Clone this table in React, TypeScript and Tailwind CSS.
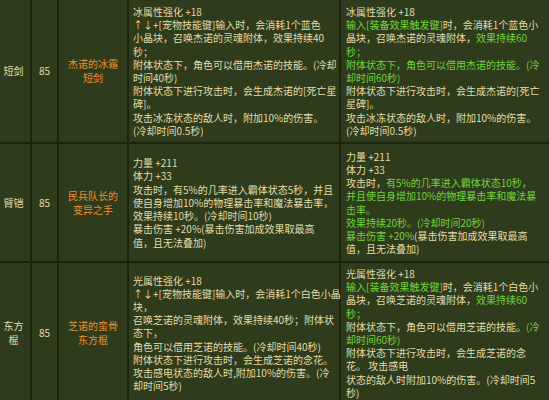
import React from "react";

// "~" toggles the green highlight inside a line
type Cell = string[];

const rows: {
  slot: string[];
  level: string;
  name: string[];
  before: Cell;
  after: Cell;
  h: string;
}[] = [
  {
    slot: ["短剑"],
    level: "85",
    name: ["杰诺的冰霜", "短剑"],
    before: [
      "冰属性强化 +18",
      "↑↓+[宠物技能键]输入时，会消耗1个蓝色",
      "小晶块，召唤杰诺的灵魂附体，效果持续40",
      "秒；",
      "附体状态下，角色可以借用杰诺的技能。(冷却",
      "时间40秒)",
      "附体状态下进行攻击时，会生成杰诺的[死亡星",
      "碑]。",
      "攻击冰冻状态的敌人时，附加10%的伤害。",
      "(冷却时间0.5秒)",
    ],
    after: [
      "冰属性强化 +18",
      "~输入[装备效果触发键]~时，会消耗1个蓝色小",
      "晶块，召唤杰诺的灵魂附体，~效果持续60",
      "~秒；",
      "~附体状态下，角色可以借用杰诺的技能。(冷",
      "~却时间60秒)",
      "附体状态下进行攻击时，会生成杰诺的[死亡",
      "星碑]。",
      "攻击冰冻状态的敌人时，附加10%的伤害。",
      "(冷却时间0.5秒)",
    ],
    h: "h-[142px]",
  },
  {
    slot: ["臂铠"],
    level: "85",
    name: ["民兵队长的", "变异之手"],
    before: [
      "力量 +211",
      "体力 +33",
      "攻击时，有5%的几率进入霸体状态5秒，并且",
      "使自身增加10%的物理暴击率和魔法暴击率，",
      "效果持续10秒。(冷却时间10秒)",
      "暴击伤害 +20%(暴击伤害加成效果取最高",
      "值，且无法叠加)",
    ],
    after: [
      "力量 +211",
      "体力 +33",
      "攻击时，~有5%的几率进入霸体状态10秒，",
      "~并且使自身增加10%的物理暴击率和魔法暴",
      "~击率。",
      "~效果持续20秒。(冷却时间20秒)",
      "~暴击伤害 +20%~(暴击伤害加成效果取最高",
      "值，且无法叠加)",
    ],
    h: "h-[117px]",
  },
  {
    slot: ["东方", "棍"],
    level: "85",
    name: ["芝诺的蛮骨", "东方棍"],
    before: [
      "光属性强化 +18",
      "↑↓+[宠物技能键]输入时，会消耗1个白色小晶",
      "块，",
      "召唤芝诺的灵魂附体，效果持续40秒；附体状",
      "态下，",
      "角色可以借用芝诺的技能。(冷却时间40秒)",
      "附体状态下进行攻击时，会生成芝诺的念花。",
      "攻击感电状态的敌人时,附加10%的伤害。(冷",
      "却时间5秒)",
    ],
    after: [
      "光属性强化 +18",
      "~输入[装备效果触发键]~时，会消耗1个白色小",
      "晶块，召唤芝诺的灵魂附体，~效果持续60",
      "~秒；",
      "附体状态下，角色可以借用芝诺的技能。~(冷",
      "~却时间60秒)",
      "附体状态下进行攻击时，会生成芝诺的念",
      "花。 攻击感电",
      "状态的敌人时附加10%的伤害。(冷却时间5",
      "秒)",
    ],
    h: "py-[4px]",
  },
];

function Line({ text }: { text: string }) {
  const parts = text.split("~");
  return (
    <div className="whitespace-nowrap">
      {parts.map((p, i) => (
        <span key={i} className={i % 2 === 1 ? "text-[#72d43c]" : "text-[#e4ddaa]"}>
          {p}
        </span>
      ))}
    </div>
  );
}

export default function App() {
  return (
    <div
      className="w-[549px] h-[400px] overflow-hidden bg-[#1b240f] text-[10px] leading-[13.2px]"
      style={{ fontFamily: '"Noto Sans CJK SC", "Liberation Sans", sans-serif' }}
    >
      <div className="grid grid-cols-[30px_25px_68px_210px_1fr] gap-[2px] w-[551px]">
        {rows.map((r, ri) => (
          <React.Fragment key={ri}>
            <div className={`${r.h} bg-[#2e3b1c] flex flex-col items-center justify-center pr-[3px] text-[#e4ddaa] leading-[14px]`}>
              {r.slot.map((s) => (
                <div key={s}>{s}</div>
              ))}
            </div>
            <div className={`${r.h} bg-[#2e3b1c] flex items-center justify-center text-[#e4ddaa]`}>
              {r.level}
            </div>
            <div className={`${r.h} bg-[#2e3b1c] flex flex-col items-center justify-center text-[#f08c30] leading-[14px]`}>
              {r.name.map((s) => (
                <div key={s}>{s}</div>
              ))}
            </div>
            <div className={`${r.h} bg-[#2e3b1c] flex flex-col justify-center pl-[4px]`}>
              {r.before.map((l, i) => (
                <Line key={i} text={l} />
              ))}
            </div>
            <div className={`${r.h} bg-[#2e3b1c] flex flex-col justify-center pl-[5px]`}>
              {r.after.map((l, i) => (
                <Line key={i} text={l} />
              ))}
            </div>
          </React.Fragment>
        ))}
      </div>
    </div>
  );
}
